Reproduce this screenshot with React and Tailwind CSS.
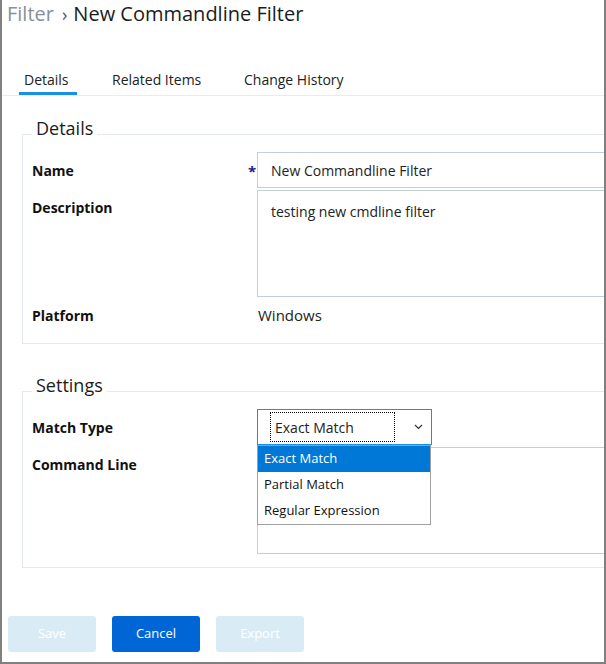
import React from "react";

function Row({ label, star, children, align = "items-center", labelClass = "" }) {
  return (
    <div className={`flex ${align}`}>
      <div className={`w-[217px] shrink-0 text-[14px] leading-[19px] font-bold text-[#111] ${labelClass}`}>{label}</div>
      <div className="w-[8px] shrink-0 relative h-[19px]">
        {star && (
          <span className="absolute left-[-1px] top-[3px] text-[15px] leading-[15px] font-bold text-[#1c1c8a]">*</span>
        )}
      </div>
      {children}
    </div>
  );
}

function Fieldset({ title, className = "", children }) {
  return (
    <fieldset className={`ml-[20px] border border-[#e3e9ef] pl-[9px] pr-0 ${className}`}>
      <legend className="px-[4px] pb-[12px] text-[18px] leading-[24px] text-[#1b1b1b]">{title}</legend>
      {children}
    </fieldset>
  );
}

export default function App() {
  return (
    <div className="w-[606px] h-[664px] bg-white border-l-2 border-r-2 border-b-2 border-[#808080] overflow-hidden font-['Open_Sans',sans-serif] text-[#222]">
      <div className="w-[660px]">
        <h1 className="pl-[5px] h-[28px] text-[20px] leading-[28px] font-normal flex items-baseline">
          <span className="text-[#8a9097]">Filter</span>
          <span className="ml-[8px] text-[#555] text-[18px]">›</span>
          <span className="ml-[6px] text-[#1b1b1b]">New Commandline Filter</span>
        </h1>

        <div className="mt-[42px] flex border-b border-[#e6ecf2] text-[14px] leading-[19px] text-[#222]">
          <div className="ml-[17px] w-[58px] pl-[5px] pb-[3px] border-b-[3px] border-[#1a8fe3]">Details</div>
          <div className="ml-[30px] w-[102px] pl-[5px] pb-[3px] border-b-[3px] border-transparent">Related Items</div>
          <div className="ml-[30px] pl-[5px] pb-[3px] border-b-[3px] border-transparent">Change History</div>
        </div>

        <Fieldset title="Details" className="mt-[20px] pb-[17px]">
          <Row label="Name" star>
            <div className="flex-1 h-[36px] border border-[#c5cdd6] pl-[13px] flex items-center text-[14px] text-[#222]">
              New Commandline Filter
            </div>
          </Row>
          <div className="mt-[2px]">
            <Row label="Description" align="items-start" labelClass="pt-[8px]">
              <div className="flex-1 h-[107px] border border-[#c5cdd6] pl-[13px] pt-[11px] text-[14px] leading-[19px] text-[#222]">
                testing new cmdline filter
              </div>
            </Row>
          </div>
          <div className="mt-[8px] flex items-baseline">
            <div className="w-[217px] shrink-0 text-[14px] leading-[20px] font-bold text-[#111]">Platform</div>
            <div className="w-[9px] shrink-0" />
            <div className="text-[15px] leading-[20px] text-[#222]">Windows</div>
          </div>
        </Fieldset>

        <Fieldset title="Settings" className="mt-[29px] pb-[13px]">
          <Row label="Match Type">
            <div className="relative w-[175px] h-[36px] border border-[#1e8fe1] flex items-center">
              <div className="ml-[12px] w-[125px] h-[30px] border border-dotted border-black flex items-center pl-[4px] text-[14px] text-[#222]">
                Exact Match
              </div>
              <svg className="ml-[19px]" width="9" height="6" viewBox="0 0 9 6">
                <polyline points="1,1 4.5,4.5 8,1" fill="none" stroke="#333" strokeWidth="1.2" />
              </svg>
              <div className="absolute left-[-1px] top-[35px] w-[174px] border border-[#a0a0a0] bg-white z-10 text-[13px] text-[#111]">
                <div className="h-[26px] bg-[#0078d7] text-white pl-[6px] flex items-center">Exact Match</div>
                <div className="h-[26px] pl-[6px] flex items-center">Partial Match</div>
                <div className="h-[26px] pl-[6px] flex items-center">Regular Expression</div>
              </div>
            </div>
          </Row>
          <div className="mt-[2px]">
            <Row label="Command Line" align="items-start" labelClass="pt-[8px]">
              <div className="flex-1 h-[107px] border border-[#c5cdd6]" />
            </Row>
          </div>
        </Fieldset>

        <div className="mt-[48px] ml-[6px] flex gap-[16px] text-[13px] text-white">
          <button className="w-[88px] h-[36px] rounded-[3px] bg-[#d9ecf5]">Save</button>
          <button className="w-[88px] h-[36px] rounded-[3px] bg-[#0066d6]">Cancel</button>
          <button className="w-[88px] h-[36px] rounded-[3px] bg-[#d9ecf5]">Export</button>
        </div>
      </div>
    </div>
  );
}
